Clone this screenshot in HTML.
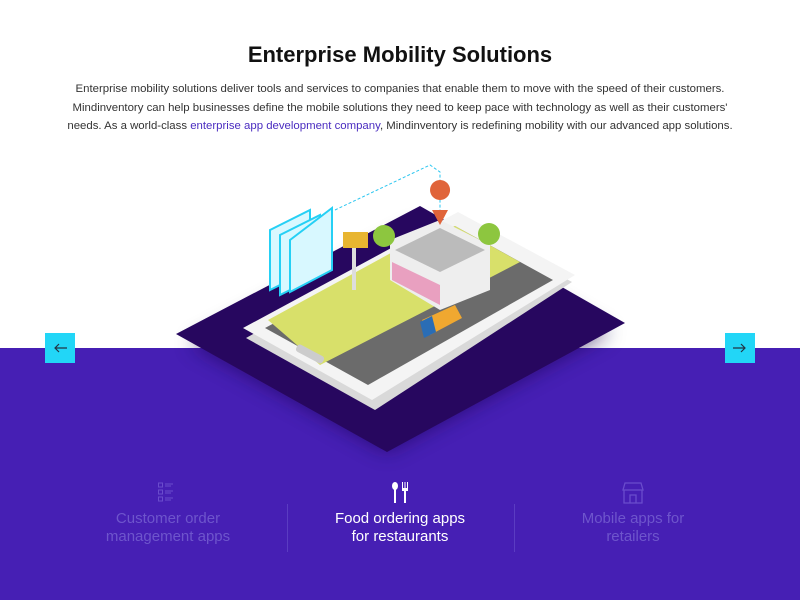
<!DOCTYPE html>
<html><head><style>
body{margin:0;width:800px;height:600px;overflow:hidden;background:#fff;font-family:"Liberation Sans",sans-serif;position:relative}
h1{position:absolute;top:42px;left:0;width:800px;text-align:center;margin:0;font-size:22px;font-weight:bold;color:#111;letter-spacing:0}
.p{position:absolute;top:80px;left:60px;width:680px;text-align:center;font-size:11.4px;line-height:18.5px;color:#333}
.p a{color:#4a2cc0;text-decoration:none}
.band{position:absolute;top:348px;left:0;width:800px;height:252px;background:#461fb4}
.btn{position:absolute;top:333px;width:30px;height:30px;background:#22d6f7}
.item{position:absolute;top:510px;width:200px;text-align:center;font-size:15px;line-height:18px;color:#6e55cc}
.sep{position:absolute;top:504px;width:1px;height:48px;background:#5b3cc2}
</style></head><body>
<h1>Enterprise Mobility Solutions</h1>
<div class="p">Enterprise mobility solutions deliver tools and services to companies that enable them to move with the speed of their customers. Mindinventory can help businesses define the mobile solutions they need to keep pace with technology as well as their customers' needs. As a world-class <a>enterprise app development company</a>, Mindinventory is redefining mobility with our advanced app solutions.</div>
<div class="band"></div>
<svg style="position:absolute;left:0;top:0" width="800" height="600">
<defs><filter id="b"><feGaussianBlur stdDeviation="10"/></filter></defs>
<polygon points="190,344 420,226 610,333 387,452" fill="#1a0550" filter="url(#b)" opacity="0.6"/>
<polygon points="176,334 420,206 625,323 387,452" fill="#27075f"/>
<polygon points="246,338 460,220 572,282 375,410" fill="#d9d9d9"/>
<polygon points="243,328 458,212 575,275 372,400" fill="#f4f4f4"/>
<polygon points="265,328 455,226 553,280 368,385" fill="#6b6b6b"/>
<polygon points="268,320 400,248 470,288 320,365" fill="#d8e06a"/>
<polygon points="400,248 455,226 520,262 470,288" fill="#d8e06a"/>
<rect x="295" y="350" width="30" height="8" rx="3" fill="#ccc" transform="rotate(28 310 354)"/>
<polyline points="335,210 430,165 440,172 440,215" fill="none" stroke="#2bc6f0" stroke-dasharray="3,2"/>
<g fill="#d8f8ff" stroke="#25d0f5" stroke-width="2">
<polygon points="270,230 310,210 310,270 270,290"/><polygon points="280,235 320,215 320,275 280,295"/><polygon points="290,240 332,208 332,270 290,292"/></g>
<rect x="352" y="240" width="4" height="50" fill="#ddd"/>
<rect x="343" y="232" width="25" height="16" fill="#e8b530"/>
<polygon points="390,240 440,220 490,245 490,290 440,310 390,280" fill="#eee"/>
<polygon points="395,250 440,228 485,250 440,272" fill="#bbb"/>
<polygon points="392,262 440,285 440,305 392,280" fill="#e9a0c0"/>
<path d="M440 200a10 10 0 1 1 0.1 0 z M432 210 L440 225 L448 210z" fill="#e0643a"/>
<circle cx="384" cy="236" r="11" fill="#8dc63f"/><circle cx="489" cy="234" r="11" fill="#8dc63f"/>
<polygon points="422,320 455,305 462,318 430,335" fill="#f0a830"/>
<polygon points="420,322 432,316 436,332 424,338" fill="#2a6db5"/>
</svg>
<div class="btn" style="left:45px"><svg width="30" height="30"><path d="M10 15h12M14 11l-4 4 4 4" stroke="#234" stroke-width="1.2" fill="none"/></svg></div>
<div class="btn" style="left:725px"><svg width="30" height="30"><path d="M8 15h12M16 11l4 4-4 4" stroke="#234" stroke-width="1.2" fill="none"/></svg></div>
<svg style="position:absolute;left:157px;top:481px" width="24" height="24"><g stroke="#6a4ccc" fill="none"><rect x="1.5" y="2" width="4" height="4"/><rect x="1.5" y="9" width="4" height="4"/><rect x="1.5" y="16" width="4" height="4"/><path d="M8 3h8M8 5h6M8 10h8M8 12h6M8 17h8M8 19h6"/></g></svg>
<svg style="position:absolute;left:389px;top:481px" width="24" height="24"><g fill="#fff"><ellipse cx="6" cy="5" rx="3" ry="4"/><rect x="5" y="8" width="2" height="14"/><rect x="13" y="1" width="1" height="8"/><rect x="15.5" y="1" width="1" height="8"/><rect x="18" y="1" width="1" height="8"/><rect x="13" y="7" width="6" height="3"/><rect x="15" y="9" width="2" height="13"/></g></svg>
<svg style="position:absolute;left:621px;top:481px" width="24" height="24"><g stroke="#6a4ccc" fill="none" stroke-width="1.3"><path d="M4 2h16l2 7H2z M3 9v13h18V9 M9 22v-8h6v8"/></g></svg>
<div class="item" style="left:68px">Customer order<br>management apps</div>
<div class="sep" style="left:287px"></div>
<div class="item" style="left:300px;color:#fff">Food ordering apps<br>for restaurants</div>
<div class="sep" style="left:514px"></div>
<div class="item" style="left:533px">Mobile apps for<br>retailers</div>
</body></html>
